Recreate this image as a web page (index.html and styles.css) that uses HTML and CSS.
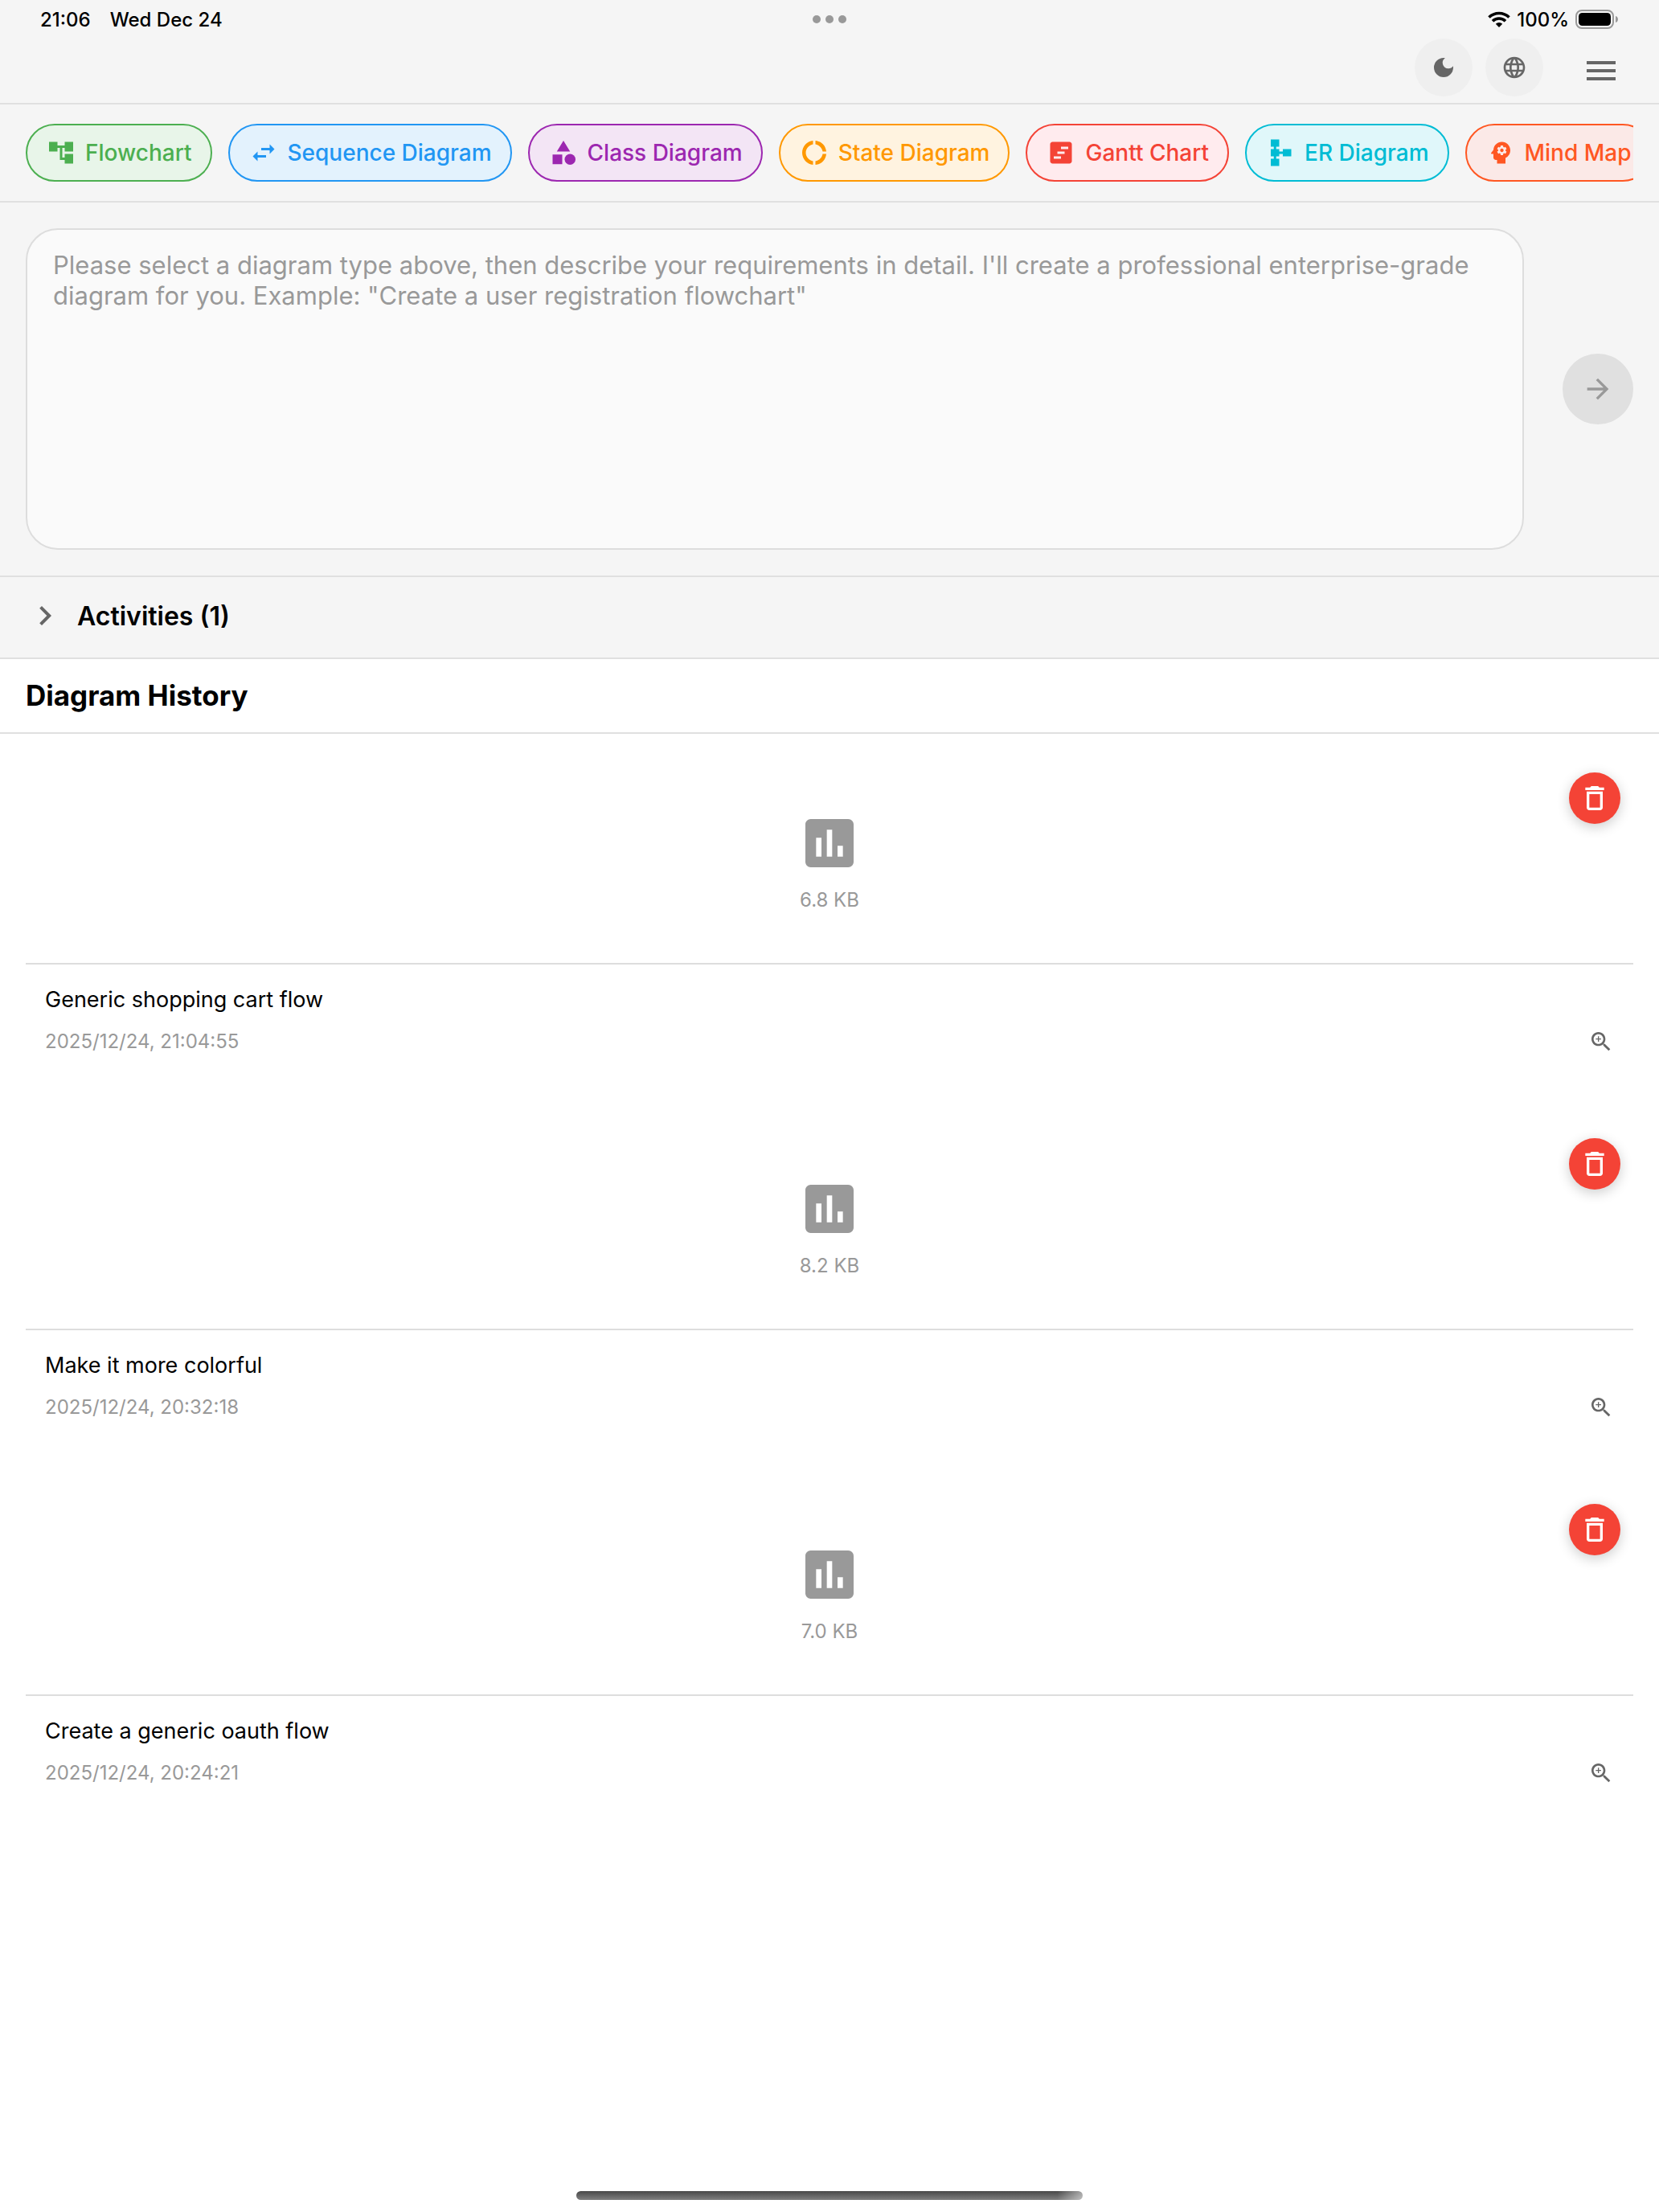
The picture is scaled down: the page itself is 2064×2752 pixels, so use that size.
FILE: index.html
```html
<!DOCTYPE html>
<html lang="en">
<head>
<meta charset="UTF-8" />
<meta name="viewport" content="width=device-width, initial-scale=1.0">
<title>Diagram History</title>
<link rel="stylesheet" href="styles.css">
</head>
<body>

<svg class="sprite" aria-hidden="true">
  <symbol id="i-chart" viewBox="0 0 24 24"><path d="M19 3H5c-1.1 0-2 .9-2 2v14c0 1.1.9 2 2 2h14c1.1 0 2-.9 2-2V5c0-1.1-.9-2-2-2zM9 17H7v-7h2v7zm4 0h-2V7h2v10zm4 0h-2v-4h2v4z"/></symbol>
  <symbol id="i-delete" viewBox="0 0 24 24"><path d="M6 19c0 1.1.9 2 2 2h8c1.1 0 2-.9 2-2V7H6v12zM8 9h8v10H8V9zm7.5-5l-1-1h-5l-1 1H5v2h14V4z"/></symbol>
  <symbol id="i-zoom" viewBox="0 0 24 24"><path d="M15.5 14h-.79l-.28-.27C15.41 12.59 16 11.11 16 9.5 16 5.91 13.09 3 9.5 3S3 5.91 3 9.5 5.91 16 9.5 16c1.61 0 3.09-.59 4.23-1.57l.27.28v.79l5 4.99L20.49 19l-4.99-5zm-6 0C7.01 14 5 11.99 5 9.5S7.01 5 9.5 5 14 7.01 14 9.5 11.99 14 9.5 14zm2.5-4h-2v2H9v-2H7V9h2V7h1v2h2v1z"/></symbol>
</svg>

<div class="status">
  <div class="status-left"><span>21:06</span><span>Wed Dec 24</span></div>
  <div class="dots"><i></i><i></i><i></i></div>
  <div class="status-right">
    <svg class="wifi" viewBox="0 0 28 20"><path d="M1.5 7.5a18 18 0 0 1 25 0M6 12.2a11.5 11.5 0 0 1 16 0" fill="none" stroke="#000" stroke-width="3.6"/><path d="M14 20l-4.2-4.3a6 6 0 0 1 8.4 0z"/></svg>
    <span>100%</span>
    <svg class="battery" viewBox="0 0 54 24"><rect x="1" y="1" width="46" height="22" rx="7" fill="none" stroke="#999" stroke-width="2"/><rect x="4" y="4" width="40" height="16" rx="4.5"/><path d="M50 8c4 1 4 7 0 8z" fill="#999"/></svg>
  </div>
</div>

<header class="header">
  <button class="round" aria-label="Dark mode"><svg viewBox="0 0 24 24"><path d="M12 3a9 9 0 1 0 9 9c0-.46-.04-.92-.1-1.36a5.389 5.389 0 0 1-4.4 2.26 5.403 5.403 0 0 1-3.14-9.8c-.44-.06-.9-.1-1.36-.1z"/></svg></button>
  <button class="round" aria-label="Language"><svg viewBox="0 0 24 24"><path d="M11.99 2C6.47 2 2 6.48 2 12s4.47 10 9.99 10C17.52 22 22 17.52 22 12S17.52 2 11.99 2zm6.93 6h-2.95c-.32-1.25-.78-2.45-1.38-3.56 1.84.63 3.37 1.91 4.33 3.56zM12 4.04c.83 1.2 1.48 2.53 1.91 3.96h-3.82c.43-1.43 1.08-2.76 1.91-3.96zM4.26 14C4.1 13.36 4 12.69 4 12s.1-1.36.26-2h3.38c-.08.66-.14 1.32-.14 2s.06 1.34.14 2H4.26zm.82 2h2.95c.32 1.25.78 2.45 1.38 3.56-1.84-.63-3.37-1.9-4.33-3.56zm2.95-8H5.08c.96-1.66 2.49-2.93 4.33-3.56C8.81 5.55 8.35 6.75 8.03 8zM12 19.96c-.83-1.2-1.48-2.53-1.91-3.96h3.82c-.43 1.43-1.08 2.76-1.91 3.96zM14.34 14H9.66c-.09-.66-.16-1.32-.16-2s.07-1.35.16-2h4.68c.09.65.16 1.32.16 2s-.07 1.34-.16 2zm.25 5.56c.6-1.11 1.06-2.31 1.38-3.56h2.95c-.96 1.65-2.49 2.93-4.33 3.56zM16.36 14c.08-.66.14-1.32.14-2s-.06-1.34-.14-2h3.38c.16.64.26 1.31.26 2s-.1 1.36-.26 2h-3.38z"/></svg></button>
  <button class="menu" aria-label="Menu"><svg viewBox="0 0 24 24"><path d="M3 18h18v-2H3v2zm0-5h18v-2H3v2zm0-7v2h18V6H3z"/></svg></button>
</header>

<div class="types">
  <div class="chips">
    <button class="chip green"><svg viewBox="0 0 24 24"><path d="M22 11V3h-7v3H9V3H2v8h7V8h2v10h4v3h7v-8h-7v3h-2V8h2v3z"/></svg>Flowchart</button>
    <button class="chip blue"><svg viewBox="0 0 24 24"><path d="M6.99 11L3 15l3.99 4v-3H14v-2H6.99v-3zM21 9l-3.99-4v3H10v2h7.01v3L21 9z"/></svg>Sequence Diagram</button>
    <button class="chip purple"><svg viewBox="0 0 24 24"><path d="M12 2l-5.5 9h11zM3 13.5h8v8H3z"/><circle cx="17.5" cy="17.5" r="4.5"/></svg>Class Diagram</button>
    <button class="chip orange"><svg viewBox="0 0 24 24"><path d="M11 5.08V2c-5 .5-9 4.81-9 10s4 9.5 9 10v-3.08c-3-.48-6-3.4-6-6.92s3-6.44 6-6.92zM18.97 11H22c-.47-5-4-8.53-9-9v3.08C16 5.51 18.54 8 18.97 11zM13 18.92V22c5-.47 8.53-4 9-9h-3.03c-.43 3-2.97 5.49-5.97 5.92z"/></svg>State Diagram</button>
    <button class="chip red"><svg viewBox="0 0 24 24"><path d="M19 3H5c-1.1 0-2 .9-2 2v14c0 1.1.9 2 2 2h14c1.1 0 2-.9 2-2V5c0-1.1-.9-2-2-2zM12 17H6v-2h6v2zm3-4H9v-2h6v2zm3-4h-6V7h6v2z"/></svg>Gantt Chart</button>
    <button class="chip cyan"><svg viewBox="0 0 24 24"><path d="M14 9v2h-3V9H8.5V7H11V1H4v6h2.5v2H4v6h2.5v2H4v6h7v-6H8.5v-2H11v-2h3v2h7V9z"/></svg>ER Diagram</button>
    <button class="chip deep"><svg viewBox="0 0 24 24"><path d="M13 8.57c-.79 0-1.43.64-1.43 1.43s.64 1.43 1.43 1.43 1.43-.64 1.43-1.43-.64-1.43-1.43-1.43z"/><path d="M13 3C9.25 3 6.2 5.94 6.02 9.64L4.1 12.2c-.25.33-.01.8.4.8H6v3c0 1.1.9 2 2 2h1v3h7v-4.68c2.36-1.12 4-3.53 4-6.32 0-3.87-3.13-7-7-7zm3 7c0 .13-.01.26-.02.39l.83.66c.08.06.1.16.05.25l-.8 1.39c-.05.09-.16.12-.24.09l-.99-.4c-.21.16-.43.29-.67.39L14 13.83c-.01.1-.1.17-.2.17h-1.6c-.1 0-.18-.07-.2-.17l-.15-1.06c-.25-.1-.47-.23-.68-.39l-.99.4c-.09.03-.2 0-.25-.09l-.8-1.39c-.05-.08-.03-.19.05-.25l.84-.66c-.01-.13-.02-.26-.02-.39s.02-.27.04-.39l-.85-.66c-.08-.06-.1-.16-.05-.26l.8-1.38c.05-.09.15-.12.24-.09l1 .4c.2-.15.43-.29.67-.39L12 6.17c.02-.1.1-.17.2-.17h1.6c.1 0 .18.07.2.17l.15 1.06c.24.1.46.23.67.39l1-.4c.09-.03.2 0 .24.09l.8 1.38c.05.09.03.2-.05.26l-.85.66c.03.12.04.25.04.39z"/></svg>Mind Map</button>
  </div>
</div>

<div class="prompt">
  <textarea aria-label="Diagram description" placeholder="Please select a diagram type above, then describe your requirements in detail. I'll create a professional enterprise-grade diagram for you. Example: &quot;Create a user registration flowchart&quot;"></textarea>
  <button class="send" aria-label="Send"><svg viewBox="0 0 24 24"><path d="M12 4l-1.41 1.41L16.17 11H4v2h12.17l-5.58 5.59L12 20l8-8z"/></svg></button>
</div>

<button class="activities"><svg viewBox="0 0 24 24"><path d="M10 6L8.59 7.41 13.17 12l-4.58 4.59L10 18l6-6z"/></svg>Activities (1)</button>

<main>
  <h2>Diagram History</h2>
  <div class="history">
    <article class="card">
      <div class="preview">
        <svg><use href="#i-chart"/></svg>
        <span>6.8 KB</span>
        <button class="delete" aria-label="Delete"><svg><use href="#i-delete"/></svg></button>
      </div>
      <div class="info">
        <h3>Generic shopping cart flow</h3>
        <div class="meta"><time>2025/12/24, 21:04:55</time><button class="zoom" aria-label="Zoom"><svg><use href="#i-zoom"/></svg></button></div>
      </div>
    </article>
    <article class="card">
      <div class="preview">
        <svg><use href="#i-chart"/></svg>
        <span>8.2 KB</span>
        <button class="delete" aria-label="Delete"><svg><use href="#i-delete"/></svg></button>
      </div>
      <div class="info">
        <h3>Make it more colorful</h3>
        <div class="meta"><time>2025/12/24, 20:32:18</time><button class="zoom" aria-label="Zoom"><svg><use href="#i-zoom"/></svg></button></div>
      </div>
    </article>
    <article class="card">
      <div class="preview">
        <svg><use href="#i-chart"/></svg>
        <span>7.0 KB</span>
        <button class="delete" aria-label="Delete"><svg><use href="#i-delete"/></svg></button>
      </div>
      <div class="info">
        <h3>Create a generic oauth flow</h3>
        <div class="meta"><time>2025/12/24, 20:24:21</time><button class="zoom" aria-label="Zoom"><svg><use href="#i-zoom"/></svg></button></div>
      </div>
    </article>
  </div>
</main>

<div class="home-bar"></div>

</body>
</html>
```
FILE: styles.css
```css
* { box-sizing:border-box; }
body { margin:0; font-family:Inter, "Liberation Sans", sans-serif; background:#fff; color:#000; }
button { margin:0; padding:0; border:none; background:none; font-family:inherit; color:inherit; cursor:pointer; }
svg { display:block; fill:currentColor; flex:none; }
h2, h3 { margin:0; }
.sprite { display:none; }

/* status bar */
.status { display:grid; grid-template-columns:1fr auto 1fr; align-items:center; height:48px; padding:0 50px; background:#f5f5f5; font-size:24px; font-weight:500; }
.status-left { display:flex; gap:24px; }
.dots { display:flex; gap:6px; }
.dots i { width:10px; height:10px; border-radius:50%; background:#999; }
.status-right { display:flex; justify-content:flex-end; align-items:center; gap:8px; }
.wifi { width:28px; height:20px; }
.battery { width:54px; height:24px; }

.header { display:flex; align-items:flex-start; justify-content:flex-end; gap:16px; padding:0 32px; background:#f5f5f5; border-bottom:2px solid #e0e0e0; color:#666; }
.round { display:grid; place-items:center; width:72px; height:72px; border-radius:50%; background:#efefef; }
.round svg { width:32px; height:32px; }
.menu { display:grid; place-items:center; width:80px; height:80px; margin-left:16px; }
.menu svg { width:48px; height:48px; }

/* diagram types */
.types { padding:24px 32px; background:#f5f5f5; border-bottom:2px solid #e0e0e0; }
.chips { display:flex; gap:20px; overflow:hidden; }
.chip { display:flex; flex:none; align-items:center; gap:12px; height:72px; padding:0 23px 0 24px; border:2px solid; border-radius:36px; font-size:28px; font-weight:500; white-space:nowrap; }
.chip svg { width:36px; height:36px; }
.green { color:#4caf50; background:#e8f5e9; }
.blue { color:#2196f3; background:#e3f2fd; }
.purple { color:#9c27b0; background:#f3e5f5; }
.orange { color:#ff9800; background:#fff3e0; }
.red { color:#f44336; background:#ffebee; }
.cyan { color:#00bcd4; background:#e0f7fa; }
.deep { color:#ff5722; background:#fbe9e7; }

/* prompt */
.prompt { display:flex; align-items:center; gap:48px; padding:32px; background:#f5f5f5; border-bottom:2px solid #e0e0e0; }
.prompt textarea { flex:1; height:400px; padding:25px 32px; border:2px solid #ddd; border-radius:40px; background:#fafafa; font-family:inherit; font-size:31px; line-height:38px; resize:none; outline:none; }
.prompt textarea::placeholder { color:#999; opacity:1; }
.send { display:grid; place-items:center; width:88px; height:88px; border-radius:50%; background:#e0e0e0; color:#999; }
.send svg { width:40px; height:40px; }

.activities { display:flex; align-items:center; gap:16px; width:100%; height:102px; padding:0 32px 4px; background:#f5f5f5; border-bottom:2px solid #e0e0e0; font-size:32px; font-weight:600; }
.activities svg { width:48px; height:48px; color:#666; }

/* history */
h2 { padding:24px 32px; border-bottom:2px solid #e0e0e0; font-size:35px; line-height:43px; font-weight:700; }
.history { display:flex; flex-direction:column; gap:64px; padding:32px; }
.preview { position:relative; display:flex; flex-direction:column; align-items:center; justify-content:center; gap:16px; height:255px; border-bottom:2px solid #ddd; color:#999; }
.preview > svg { width:80px; height:80px; }
.preview span { font-size:24px; line-height:29px; }
.delete { position:absolute; top:16px; right:16px; display:grid; place-items:center; width:64px; height:64px; border-radius:50%; background:#f44336; color:#fff; box-shadow:0 4px 16px rgba(0,0,0,.2); }
.delete svg { width:40px; height:40px; }
.info { padding:24px; }
h3 { font-size:27px; line-height:40px; font-weight:400; }
.meta { display:flex; align-items:center; justify-content:space-between; margin-top:16px; color:#999; font-size:24px; line-height:32px; }
.zoom { color:#666; }
.zoom svg { width:32px; height:32px; }

.home-bar { position:fixed; left:50%; bottom:15px; width:630px; height:11px; margin-left:-315px; border-radius:6px; background:linear-gradient(to right, transparent 95%, rgba(255,255,255,.5)), linear-gradient(#484848, #808080); }
```
